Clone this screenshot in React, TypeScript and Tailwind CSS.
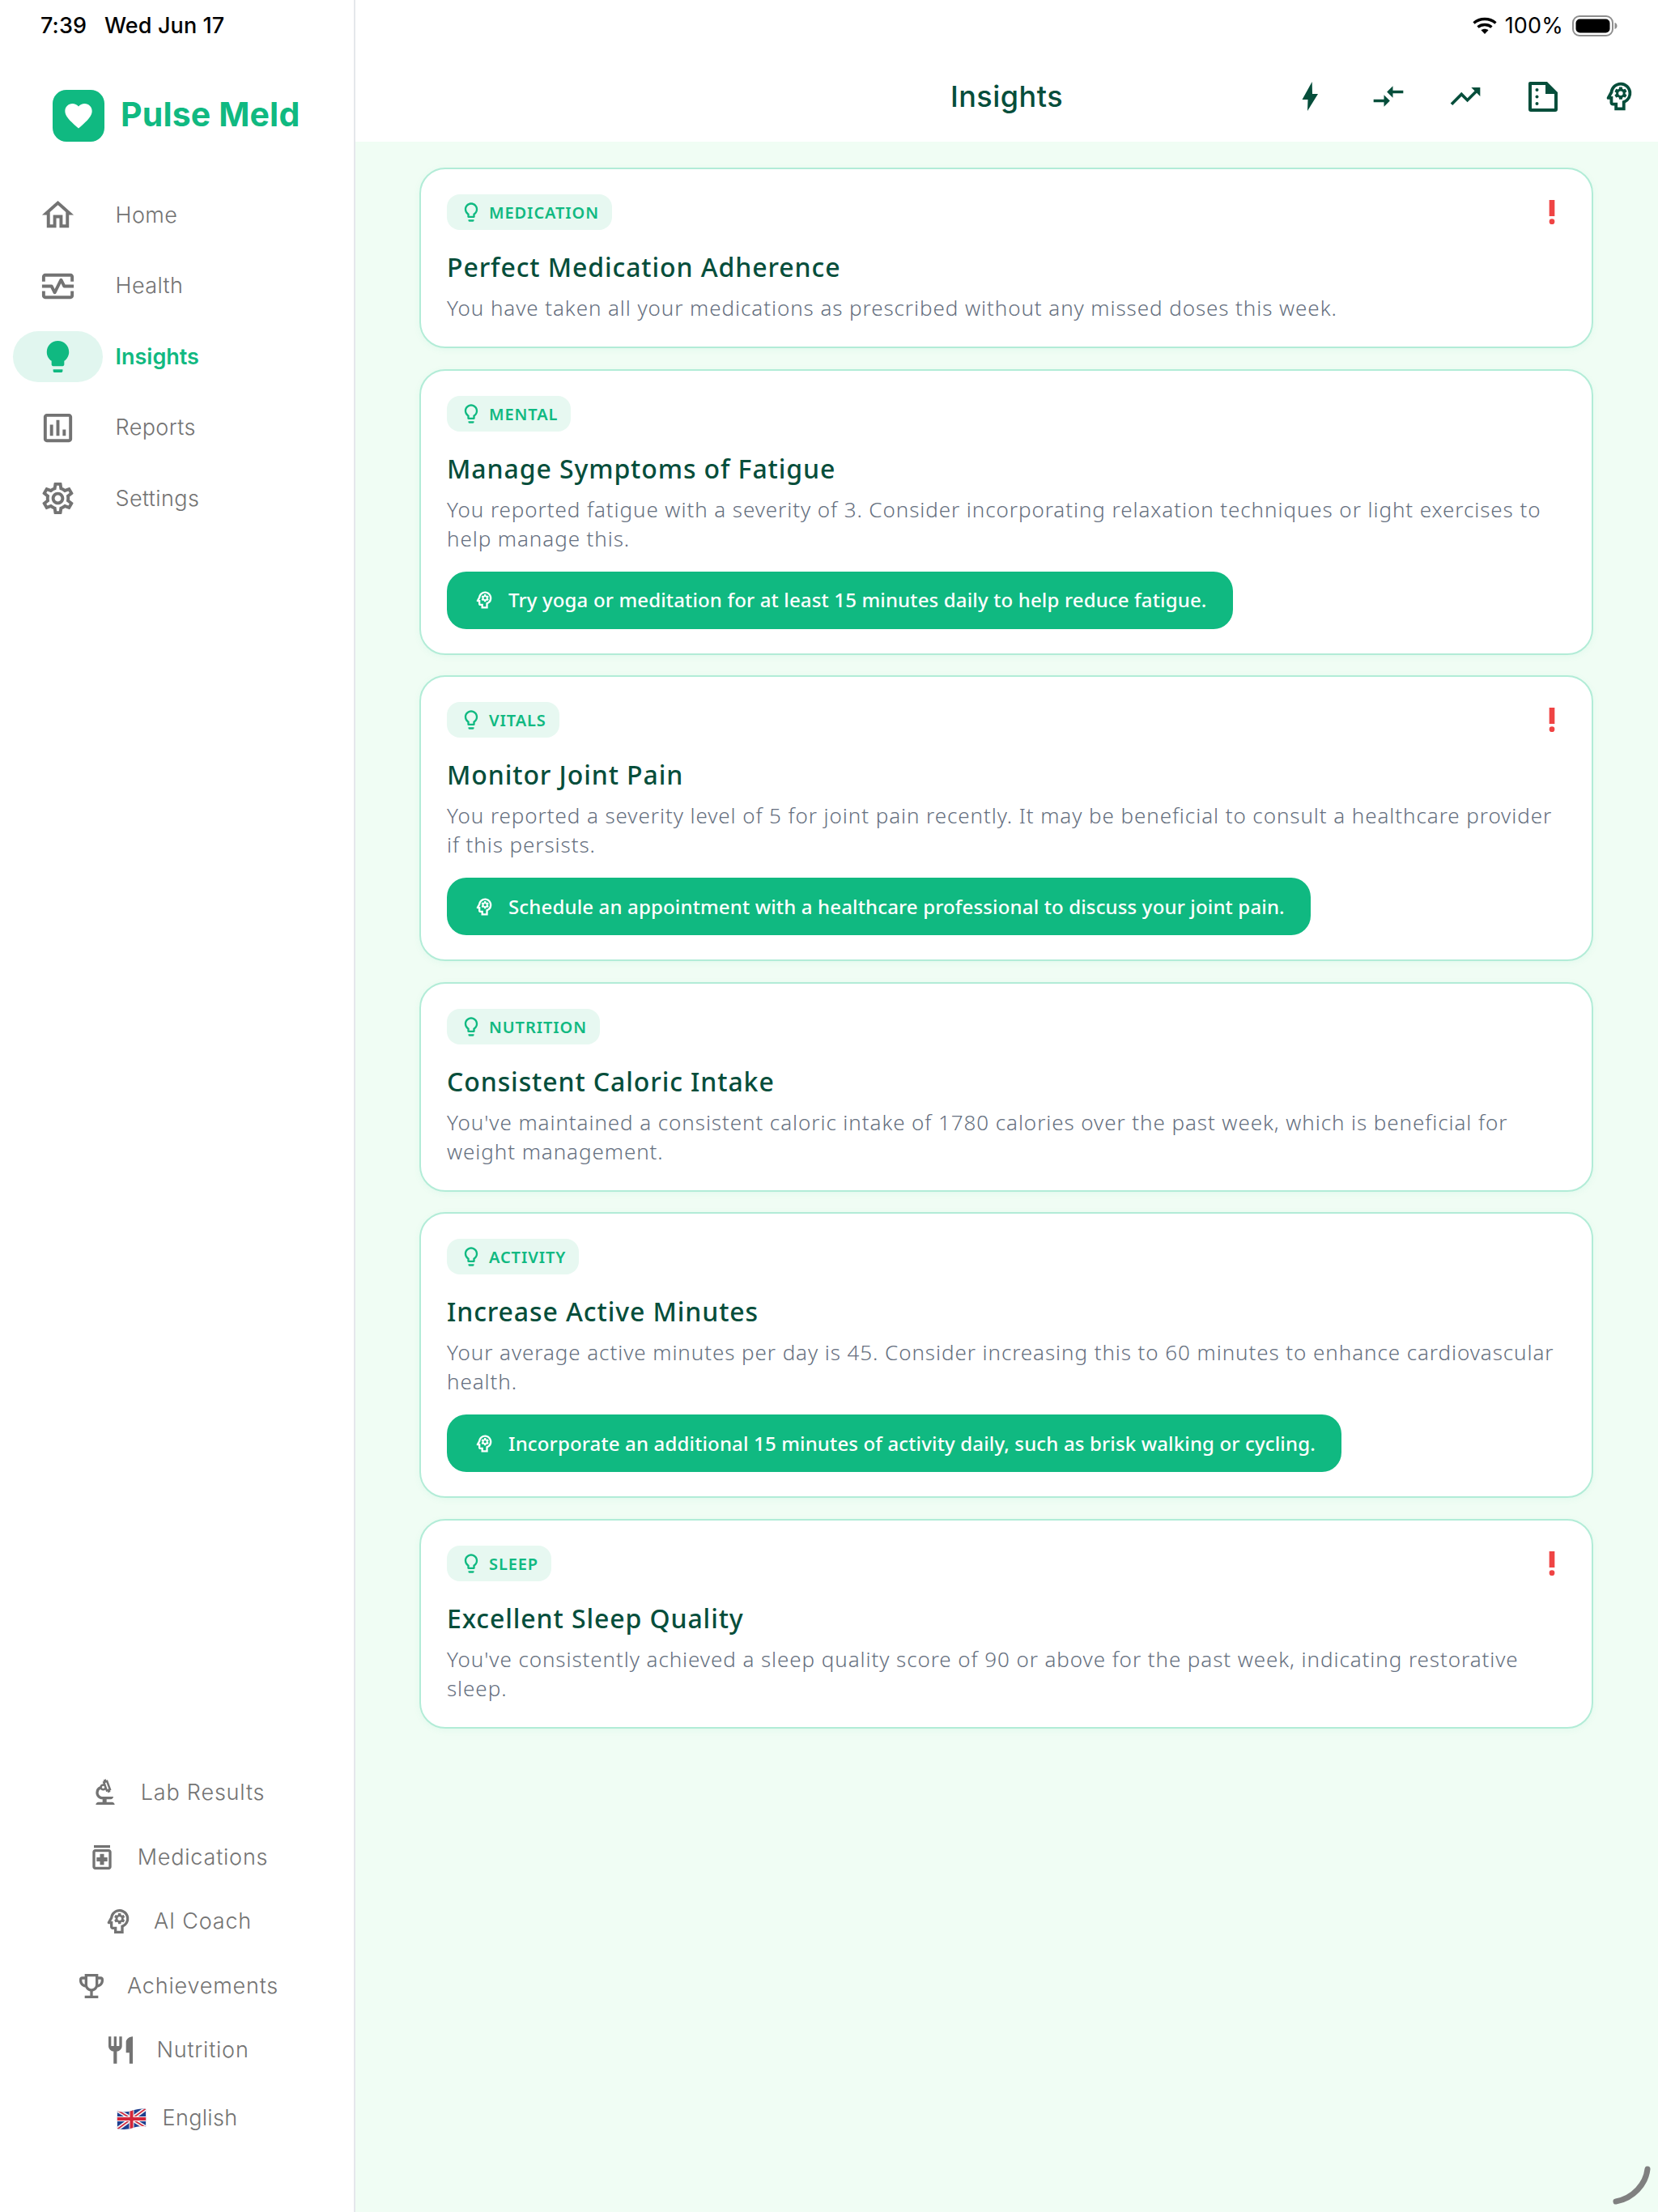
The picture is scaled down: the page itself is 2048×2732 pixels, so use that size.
import React from "react";
import {
  MdOutlineHome, MdOutlineMonitorHeart, MdLightbulb, MdOutlineAssessment, MdOutlineSettings,
  MdOutlineBiotech, MdOutlineMedication, MdOutlinePsychology, MdOutlineEmojiEvents, MdRestaurant,
  MdCompareArrows, MdTrendingUp, MdOutlineLightbulb, MdPriorityHigh, MdFavorite,
} from "react-icons/md";

const mainNav = [
  { label: "Home", Icon: MdOutlineHome },
  { label: "Health", Icon: MdOutlineMonitorHeart },
  { label: "Insights", Icon: MdLightbulb, active: true },
  { label: "Reports", Icon: MdOutlineAssessment },
  { label: "Settings", Icon: MdOutlineSettings },
];

const lowerNav = [
  { label: "Lab Results", Icon: MdOutlineBiotech },
  { label: "Medications", Icon: MdOutlineMedication },
  { label: "AI Coach", Icon: MdOutlinePsychology },
  { label: "Achievements", Icon: MdOutlineEmojiEvents },
  { label: "Nutrition", Icon: MdRestaurant },
];

const cards = [
  { tag: "MEDICATION", title: "Perfect Medication Adherence", text: "You have taken all your medications as prescribed without any missed doses this week.", alert: true },
  { tag: "MENTAL", title: "Manage Symptoms of Fatigue", text: "You reported fatigue with a severity of 3. Consider incorporating relaxation techniques or light exercises to help manage this.", action: "Try yoga or meditation for at least 15 minutes daily to help reduce fatigue." },
  { tag: "VITALS", title: "Monitor Joint Pain", text: "You reported a severity level of 5 for joint pain recently. It may be beneficial to consult a healthcare provider if this persists.", action: "Schedule an appointment with a healthcare professional to discuss your joint pain.", alert: true },
  { tag: "NUTRITION", title: "Consistent Caloric Intake", text: "You've maintained a consistent caloric intake of 1780 calories over the past week, which is beneficial for weight management." },
  { tag: "ACTIVITY", title: "Increase Active Minutes", text: "Your average active minutes per day is 45. Consider increasing this to 60 minutes to enhance cardiovascular health.", action: "Incorporate an additional 15 minutes of activity daily, such as brisk walking or cycling." },
  { tag: "SLEEP", title: "Excellent Sleep Quality", text: "You've consistently achieved a sleep quality score of 90 or above for the past week, indicating restorative sleep.", alert: true },
];

function BoltIcon() {
  return (
    <svg width="44" height="44" viewBox="0 0 44 44" fill="#064e3b">
      <path d="M23.7 4 11.500 26h7L18 40 31 19h-7z" />
    </svg>
  );
}

function DocIcon() {
  return (
    <svg width="44" height="44" viewBox="0 0 44 44" fill="#064e3b">
      <path fillRule="evenodd" d="M6 4h21l13 13v21a3 3 0 0 1-3 3H7a3 3 0 0 1-3-3V6a2 2 0 0 1 2-2zm2 4v29h28V19H25V8H8z" />
      <circle cx="14.5" cy="14" r="2" />
      <circle cx="14.5" cy="22.5" r="2" />
      <circle cx="14.5" cy="31" r="2" />
    </svg>
  );
}

function Flag() {
  return (
    <svg width="37" height="26" viewBox="0 0 36 26">
      <defs>
        <clipPath id="wave">
          <path d="M0 3.5C6 4.5 12 5 18 3 24 1 30 0 36 1v21.5c-6-1-12 0-18 2-6 2-12 1.500-18 .5z" />
        </clipPath>
      </defs>
      <g clipPath="url(#wave)">
        <rect width="36" height="26" fill="#1f3f8f" />
        <path d="M0 2l36 22M36 0L0 26" stroke="#f4f4f6" strokeWidth="5" />
        <path d="M0 2l36 22M36 0L0 26" stroke="#d3263a" strokeWidth="1.600" />
        <path d="M15 0h6v26h-6zM0 10h36v6H0z" fill="#f4f4f6" />
        <path d="M16 0h4v26h-4zM0 11h36v4H0z" fill="#d3263a" />
      </g>
    </svg>
  );
}

function StatusBar() {
  return (
    <div className="absolute top-0 left-0 right-0 h-[64px] flex items-center justify-between pl-[50px] pr-[50px] font-['Inter',sans-serif] text-black text-[27px]">
      <div className="flex gap-[22px] font-medium tracking-[0.1px]">
        <span>7:39</span>
        <span>Wed Jun 17</span>
      </div>
      <div className="flex items-center gap-[10px]">
        <svg width="30" height="22" viewBox="0 0 30 22" fill="none" stroke="#000" strokeWidth="3.400">
          <path d="M1.500 7.500C9 .8 21 .8 28.500 7.500" />
          <path d="M6.500 12.500c4.600-4 12.400-4 17 0" />
          <path d="M15 21l-4.500-4.800c2.500-2 6.500-2 9 0z" fill="#000" stroke="none" />
        </svg>
        <span className="font-normal mr-[1px] tracking-[0.2px]">100%</span>
        <svg width="56" height="26" viewBox="0 0 56 26">
          <rect x="1" y="1" width="49" height="24" rx="8" fill="none" stroke="#8e8e8e" strokeWidth="2" />
          <rect x="4.500" y="4.500" width="42" height="17" rx="5" fill="#000" />
          <path d="M52.500 9c2 .6 3 2.200 3 4s-1 3.400-3 4z" fill="#8e8e8e" />
        </svg>
      </div>
    </div>
  );
}

function Sidebar() {
  return (
    <aside className="w-[439px] shrink-0 h-full bg-white border-r-2 border-[#e5e7eb] flex flex-col font-['Inter',sans-serif]">
      <div className="flex items-center gap-[20px] pl-[65px] pt-[111px]">
        <div className="w-[64px] h-[64px] rounded-[17px] bg-[#10b981] flex items-center justify-center">
          <MdFavorite size={40} color="#fff" />
        </div>
        <span className="text-[41px] font-bold text-[#10b981] leading-none tracking-[0.15px] mb-[3px]">Pulse Meld</span>
      </div>
      <nav className="mt-[47px] flex flex-col pl-[16px]">
        {mainNav.map(({ label, Icon, active }) => (
          <div key={label} className="h-[87.500px] flex items-center gap-[15.500px]">
            <div className={`w-[111px] h-[63px] rounded-full flex items-center justify-center ${active ? "bg-[#e1f6ef] text-[#10b981]" : "text-[#737373]"}`}>
              <Icon size={47} />
            </div>
            <span className={`text-[27px] ${active ? "font-semibold text-[#10b981]" : "font-light text-[#737373] tracking-[0.4px]"}`}>{label}</span>
          </div>
        ))}
      </nav>
      <div className="mt-auto pb-[76px] flex flex-col">
        {lowerNav.map(({ label, Icon }) => (
          <div key={label} className="h-[79.500px] flex items-center justify-center gap-6 text-[#737373]">
            <Icon size={40} />
            <span className="text-[27px] font-light tracking-[0.8px]">{label}</span>
          </div>
        ))}
        <div className="h-[84px] pt-[5px] flex items-center justify-center gap-[20px] text-[#737373]">
          <Flag />
          <span className="text-[27px] font-light tracking-[0.3px]">English</span>
        </div>
      </div>
    </aside>
  );
}

function Header() {
  return (
    <header className="h-[175px] shrink-0 bg-white grid grid-cols-[1fr_auto_1fr] items-center pt-[64px] pb-[2px] px-[25px] text-[#064e3b] font-['Inter',sans-serif]">
      <div />
      <h1 className="text-[36px] font-medium leading-none tracking-[0.5px]">Insights</h1>
      <div className="flex justify-end items-center gap-[51.500px]">
        <BoltIcon />
        <MdCompareArrows size={44} />
        <MdTrendingUp size={44} />
        <DocIcon />
        <MdOutlinePsychology size={46} className="ml-[-2px]" />
      </div>
    </header>
  );
}

function Card({ tag, title, text, action, alert }: (typeof cards)[number] & { action?: string; alert?: boolean }) {
  return (
    <article className="bg-white border-2 border-[#b2ecd7] rounded-[32px] pt-[31px] pb-[30px] px-[32px] shadow-[0_2px_10px_rgba(16,185,129,0.06)]">
      <div className="flex items-center justify-between h-[44px]">
        <div className="h-[44px] rounded-[16px] bg-[#e7f8f1] flex items-center gap-2 px-4 text-[#10b981]">
          <MdOutlineLightbulb size={28} />
          <span className="text-[20px] font-semibold tracking-[0.9px] leading-none pt-[2px]">{tag}</span>
        </div>
        {alert && <MdPriorityHigh size={40} color="#ef4444" className="mr-[-3px]" />}
      </div>
      <h2 className="mt-[26px] text-[32px] leading-[40px] font-[550] text-[#064e3b] tracking-[0.9px]">{title}</h2>
      <p className="mt-[12px] text-[26px] leading-[36px] font-[350] text-[#667080] tracking-[0.92px]">{text}</p>
      {action && (
        <div className="mt-[23px] h-[71px] w-fit rounded-[24px] bg-[#10b981] flex items-center gap-[16px] pl-[33px] pr-[32px] text-white">
          <MdOutlinePsychology size={28} className="ml-[-1px]" />
          <span className="text-[24px] font-medium tracking-[0.15px] leading-none">{action}</span>
        </div>
      )}
    </article>
  );
}

export default function App() {
  return (
    <div className="relative w-[2048px] h-[2732px] flex overflow-hidden bg-[#f0fdf4]">
      <Sidebar />
      <main className="flex-1 min-w-0 flex flex-col">
        <Header />
        <div className="flex-1 pt-[32px] pl-[79px] pr-[80px] flex flex-col gap-[25.500px]">
          {cards.map((c) => (
            <Card key={c.tag} {...c} />
          ))}
        </div>
      </main>
      <StatusBar />
      <svg className="absolute right-0 bottom-0" width="60" height="60" viewBox="0 0 60 60" fill="none">
        <path d="M47 7C45 25 30 43 8 47" stroke="#808080" strokeWidth="7" strokeLinecap="round" />
      </svg>
    </div>
  );
}
